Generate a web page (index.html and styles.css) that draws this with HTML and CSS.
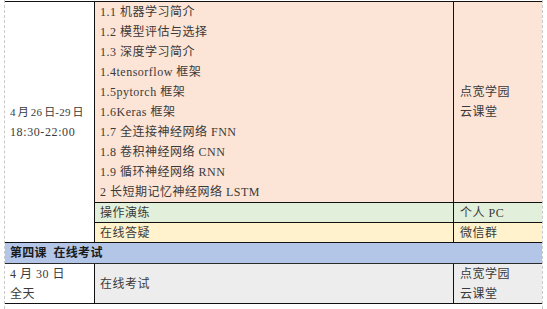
FILE: index.html
```html
<!DOCTYPE html>
<html lang="zh-CN">
<head>
<meta charset="utf-8">
<title>课程安排</title>
<link rel="stylesheet" href="styles.css">
</head>
<body>
<div class="page">
  <div class="sheet">
    <div class="cell date span3">
      <div>4 月 26 日-29 日</div>
      <div class="time">18:30-22:00</div>
    </div>
    <div class="cell topics salmon">
      <div>1.1 机器学习简介</div>
      <div>1.2 模型评估与选择</div>
      <div>1.3 深度学习简介</div>
      <div>1.4tensorflow 框架</div>
      <div>1.5pytorch 框架</div>
      <div>1.6Keras 框架</div>
      <div>1.7 全连接神经网络 FNN</div>
      <div>1.8 卷积神经网络 CNN</div>
      <div>1.9 循环神经网络 RNN</div>
      <div>2 长短期记忆神经网络 LSTM</div>
    </div>
    <div class="cell venue salmon">
      <div>点宽学园</div>
      <div>云课堂</div>
    </div>
    <div class="cell mid green"><div>操作演练</div></div>
    <div class="cell venue green"><div>个人 PC</div></div>
    <div class="cell mid yellow"><div>在线答疑</div></div>
    <div class="cell venue yellow"><div>微信群</div></div>
    <div class="cell header">第四课&nbsp; 在线考试</div>
    <div class="cell date last">
      <div>4 月 30 日</div>
      <div>全天</div>
    </div>
    <div class="cell mid grey last"><div>在线考试</div></div>
    <div class="cell venue grey last">
      <div>点宽学园</div>
      <div>云课堂</div>
    </div>
  </div>
</div>
</body>
</html>
```

FILE: styles.css
```css
html, body {
  margin: 0;
  padding: 0;
  background: #ffffff;
}

body {
  font-family: "Liberation Serif", "Noto Sans CJK SC", serif;
  font-size: 12px;
  letter-spacing: 0.5px;
  color: #3a3a3a;
}

.page {
  box-sizing: border-box;
  margin-left: 4px;
  width: 539px;
  height: 309px;
  border-left: 1px dashed #c9c9c9;
  border-right: 1px dashed #c9c9c9;
  padding-top: 1px;
}

.sheet {
  display: grid;
  grid-template-columns: 90px 359px 88px;
  grid-template-rows: 201px 20px 20px 21px 40px;
  border-top: 1px solid #111;
}

.cell {
  box-sizing: border-box;
  display: flex;
  flex-direction: column;
  justify-content: center;
  line-height: 20px;
  white-space: nowrap;
}

.date {
  padding-left: 5px;
  border-right: 1px solid #111;
  background: #ffffff;
  font-size: 11px;
  letter-spacing: 0.2px;
  word-spacing: -1px;
}

.date .time {
  font-size: 12px;
  letter-spacing: 0.6px;
}

.span3 {
  grid-row: 1 / span 3;
  border-bottom: 1px solid #111;
}

.topics {
  padding-left: 5px;
  border-right: 1px solid #111;
  border-bottom: 1px solid #111;
}

.mid {
  padding-left: 5px;
  border-right: 1px solid #111;
  border-bottom: 1px solid #111;
}

.venue {
  padding-left: 6px;
  border-bottom: 1px solid #111;
}

.salmon { background: #fce4d6; }
.green { background: #e2efda; }
.yellow { background: #fff2cc; }
.grey { background: #ededed; }

.header {
  grid-column: 1 / span 3;
  background: #b4c6e7;
  border-bottom: 1px solid #2a2a2a;
  padding-left: 5px;
  font-weight: bold;
  color: #1a1a1a;
  letter-spacing: 0.3px;
}

.last {
  border-bottom: 1px solid #111;
}

.last.date {
  font-size: 12px;
  letter-spacing: 0.5px;
  word-spacing: 0;
}
```
